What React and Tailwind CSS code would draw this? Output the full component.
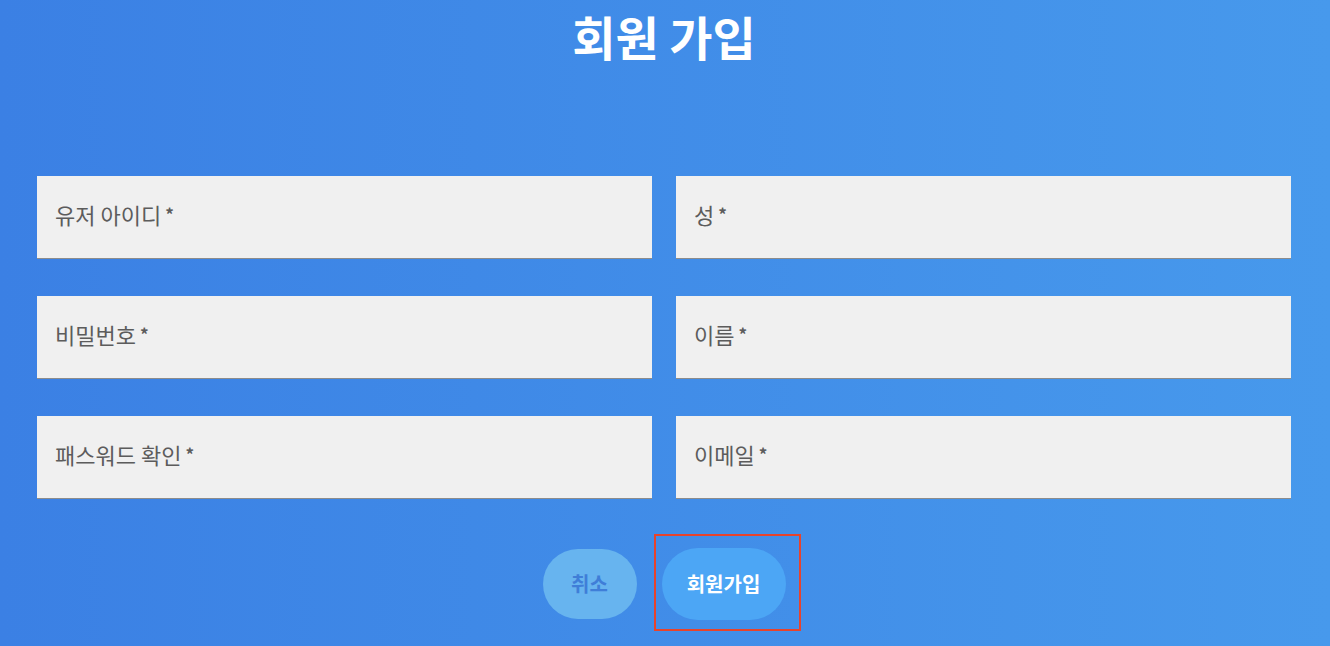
import React from 'react';

const fields = [
  ['유저 아이디', '성'],
  ['비밀번호', '이름'],
  ['패스워드 확인', '이메일'],
];

const Field = ({ label }) => (
  <div className="h-[83px] bg-[#f0f0f0] border-b border-[#8c8c8c] flex items-center px-[18px] pb-[6px]">
    <span className="text-[22px] text-[#5c5c5c]">
      {label}<span className="text-[17px] font-bold relative -top-[3px] ml-[4px]">*</span>
    </span>
  </div>
);

const App = () => {
  return (
    <div
      className="w-[1330px] h-[646px] overflow-hidden bg-gradient-to-r from-[#3b80e4] to-[#4799ec] pl-[37px] pr-[39px]"
      style={{ fontFamily: '"Noto Sans CJK KR", "Noto Sans", sans-serif' }}
    >
      <h1 className="text-center text-white font-bold text-[47px] leading-none pt-[12px] h-[176px]">
        회원 가입
      </h1>

      <div className="flex flex-col gap-[37px]">
        {fields.map(([a, b]) => (
          <div key={a} className="grid grid-cols-2 gap-[24px]">
            <Field label={a} />
            <Field label={b} />
          </div>
        ))}
      </div>

      <div className="flex justify-center items-center gap-[25px] mt-[49px]">
        <button className="w-[94px] h-[70px] rounded-full bg-[#67b4ef] text-[#3f7ed8] font-bold text-[20px]">
          취소
        </button>
        <div className="relative">
          <button className="w-[124px] h-[72px] rounded-full bg-[#4ca6f5] text-white font-bold text-[20px]">
            회원가입
          </button>
          <div className="absolute -left-[8px] -right-[15px] -top-[14px] -bottom-[11px] border-2 border-[#e8432b] pointer-events-none" />
        </div>
      </div>
    </div>
  );
};

export default App;
